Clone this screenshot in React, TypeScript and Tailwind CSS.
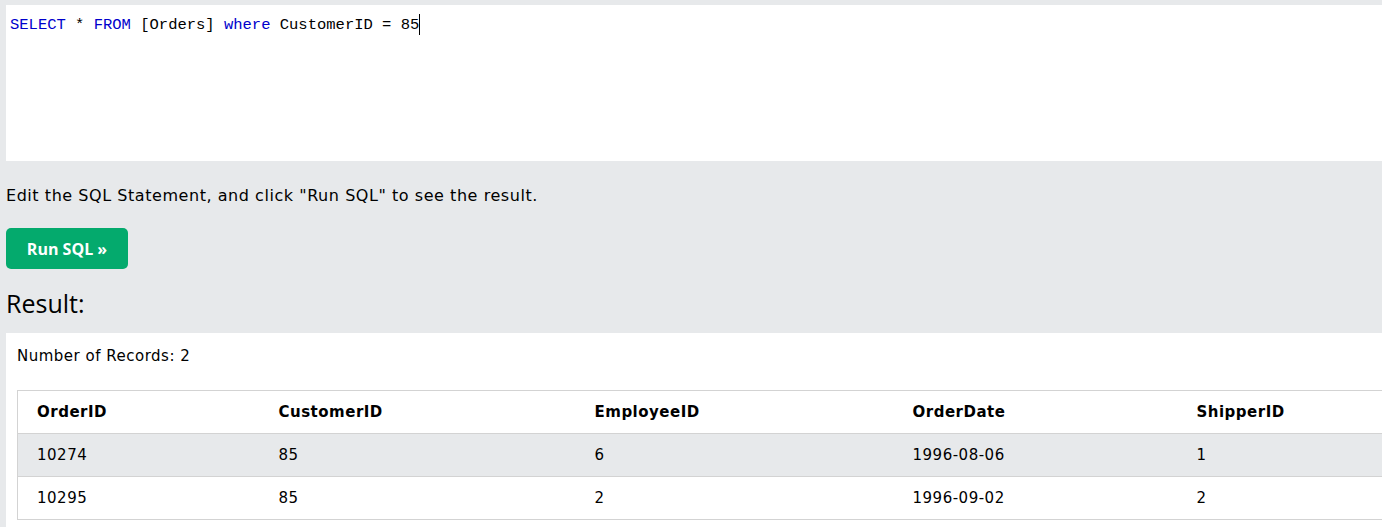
import React from "react";

const rows = [
  ["10274", "85", "6", "1996-08-06", "1"],
  ["10295", "85", "2", "1996-09-02", "2"],
];
const heads = ["OrderID", "CustomerID", "EmployeeID", "OrderDate", "ShipperID"];
const widths = ["w-[242px]", "w-[316px]", "w-[318px]", "w-[284px]", "w-[300px]"];

export default function App() {
  return (
    <div className="w-[1382px] h-[527px] overflow-hidden bg-[#e7e9eb] pl-[6px] pt-[5px] text-black tracking-[0.5px]" style={{ fontFamily: '"DejaVu Sans", Verdana, sans-serif' }}>
      <div className="h-[156px] bg-white pl-[4px] pt-[9px] tracking-normal">
        <div className="flex items-center text-[15.5px] leading-[20px] whitespace-pre" style={{ fontFamily: '"Liberation Mono", monospace' }}>
          <span className="text-[#0000cc]">SELECT</span>
          <span> * </span>
          <span className="text-[#0000cc]">FROM</span>
          <span> [Orders] </span>
          <span className="text-[#0000cc]">where</span>
          <span> CustomerID = 85</span>
          <span className="inline-block w-px h-[21px] bg-black"></span>
        </div>
      </div>
      <p className="mt-[25px] text-[16px] leading-[20px] tracking-[0.55px]">Edit the SQL Statement, and click "Run SQL" to see the result.</p>
      <button className="mt-[22px] w-[122px] h-[41px] rounded-[5px] bg-[#04aa6d] text-white text-[16px] font-bold tracking-normal" style={{ fontFamily: '"Open Sans", sans-serif' }}>Run SQL »</button>
      <h2 className="mt-[17px] text-[25px] leading-[34px] text-black tracking-normal" style={{ fontFamily: '"Open Sans", sans-serif' }}>Result:</h2>
      <div className="mt-[13px] bg-white pl-[11px] pt-[13px] h-[300px]">
        <div className="text-[15px] leading-[20px]">Number of Records: 2</div>
        <table className="mt-[24px] border-collapse table-fixed w-[1460px] text-[15px]">
          <thead>
            <tr className="h-[43px] border border-[#d3d3d3]">
              {heads.map((h, i) => (
                <th key={h} className={`${widths[i]} text-left font-bold pl-[19px] border-t border-b border-[#d3d3d3]`}>{h}</th>
              ))}
            </tr>
          </thead>
          <tbody>
            {rows.map((r, ri) => (
              <tr key={ri} className={`h-[43px] border border-[#d3d3d3] ${ri === 0 ? "bg-[#e7e9eb]" : "bg-white"}`}>
                {r.map((c, i) => (
                  <td key={i} className="pl-[19px] border-b border-[#d3d3d3]">{c}</td>
                ))}
              </tr>
            ))}
          </tbody>
        </table>
      </div>
    </div>
  );
}
